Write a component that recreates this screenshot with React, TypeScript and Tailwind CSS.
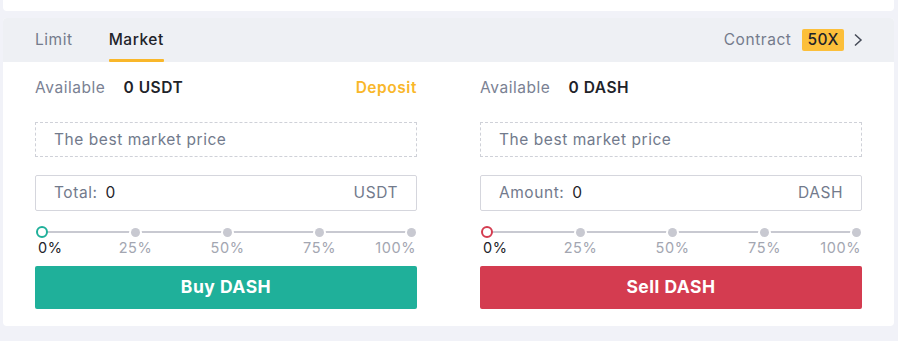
import React from "react";

function Slider({ color }: { color: string }) {
  const labels = ["0%", "25%", "50%", "75%", "100%"];
  return (
    <div className="mt-[15px]">
      <div className="relative h-[12px] mx-[1px]">
        <div className="absolute left-[6px] right-[4px] top-[5px] h-[2px] bg-[#c8c9d1]" />
        <div className="absolute inset-0 flex items-center justify-between">
          <div
            className="w-[12px] h-[12px] rounded-full border-2 bg-white z-10"
            style={{ borderColor: color }}
          />
          <div className="w-[9px] h-[9px] rounded-full bg-[#c8c9d1] z-10 ring-2 ring-white" />
          <div className="w-[9px] h-[9px] rounded-full bg-[#c8c9d1] z-10 ring-2 ring-white" />
          <div className="w-[9px] h-[9px] rounded-full bg-[#c8c9d1] z-10 ring-2 ring-white" />
          <div className="w-[9px] h-[9px] rounded-full bg-[#c8c9d1] z-10 ring-2 ring-white" />
        </div>
      </div>
      <div className="flex justify-between text-[14.5px] leading-[18px] tracking-[0.6px] mt-[1px] mx-[1px]">
        {labels.map((l, i) => (
          <div
            key={l}
            className={
              i === 0
                ? "w-[12px] flex justify-start whitespace-nowrap pl-[2px] text-[#1e2329]"
                : i === 4
                ? "w-[9px] flex justify-end whitespace-nowrap text-[#a3a6b1]"
                : "w-[9px] flex justify-center whitespace-nowrap text-[#a3a6b1]"
            }
          >
            <span>{l}</span>
          </div>
        ))}
      </div>
    </div>
  );
}

function Column({
  amount,
  showDeposit,
  inputLabel,
  unit,
  color,
  btn,
}: {
  amount: string;
  showDeposit: boolean;
  inputLabel: string;
  unit: string;
  color: string;
  btn: string;
}) {
  return (
    <div className="flex flex-col">
      <div className="flex items-center h-[52px] text-[15.5px] tracking-[0.55px]">
        <span className="text-[#7a8193]">Available</span>
        <span className="ml-[18px] font-semibold text-[#1e2329]">{amount}</span>
        {showDeposit && (
          <span className="ml-auto font-semibold text-[#f9b72a]">Deposit</span>
        )}
      </div>
      <div className="mt-[8px] h-[35px] border border-dashed border-[#cfd1d8] flex items-center px-[18px] text-[15.5px] tracking-[0.55px] text-[#727a8c]">
        The best market price
      </div>
      <div className="mt-[18px] h-[36px] border border-[#d5d6dd] rounded-[2px] flex items-center px-[18px] text-[15.5px] tracking-[0.55px]">
        <span className="text-[#727a8c]">{inputLabel}</span>
        <span className="ml-[8px] text-[#1e2329]">0</span>
        <span className="ml-auto text-[#727a8c]">{unit}</span>
      </div>
      <Slider color={color} />
      <button
        className="mt-[9px] h-[43px] rounded-[2px] text-white font-bold text-[17.5px] tracking-[0.5px]"
        style={{ backgroundColor: color }}
      >
        {btn}
      </button>
    </div>
  );
}

export default function App() {
  return (
    <div
      className="w-[898px] h-[341px] bg-[#f1f2f8] pl-[3px] pr-[4px] overflow-hidden"
      style={{ fontFamily: "Inter, 'Noto Sans', sans-serif" }}
    >
      <div className="h-[11px] bg-white rounded-b-[4px]" />
      <div className="mt-[7px] bg-white rounded-[4px] overflow-hidden">
        <div className="h-[44px] bg-[#eef0f4] flex items-stretch px-[32px] text-[15.5px] tracking-[0.55px]">
          <div className="flex items-center text-[#747b8c]">Limit</div>
          <div className="ml-[36px] flex items-center relative text-[#1e2329] font-medium">
            Market
            <div className="absolute left-0 right-0 bottom-0 h-[3px] bg-[#f9b72a] rounded-[1px]" />
          </div>
          <div className="ml-auto flex items-center">
            <span className="text-[#747b8c]">Contract</span>
            <span className="ml-[11px] bg-[#fcbf3a] text-[#1e2329] px-[5px] h-[22px] leading-[22px] rounded-[2px] font-medium">
              50X
            </span>
            <svg className="ml-[9px] mr-[-1px]" width="10" height="14" viewBox="0 0 10 14" fill="none">
              <path d="M2 1.5 L8 7 L2 12.5" stroke="#454b57" strokeWidth="1.5" />
            </svg>
          </div>
        </div>
        <div className="grid grid-cols-2 gap-[63px] px-[32px] pb-[17px]">
          <Column
            amount="0 USDT"
            showDeposit
            inputLabel="Total:"
            unit="USDT"
            color="#1fb09a"
            btn="Buy DASH"
          />
          <Column
            amount="0 DASH"
            showDeposit={false}
            inputLabel="Amount:"
            unit="DASH"
            color="#d43c50"
            btn="Sell DASH"
          />
        </div>
      </div>
    </div>
  );
}
